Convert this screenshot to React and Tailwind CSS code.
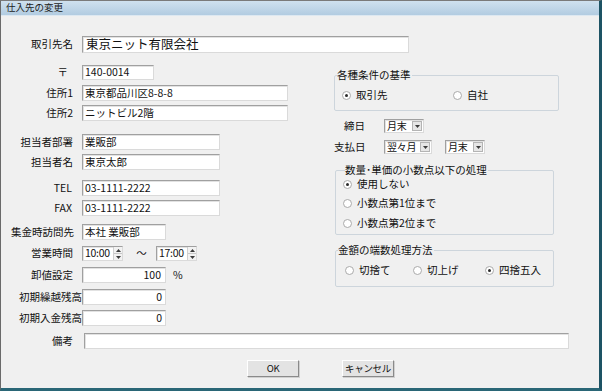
import React from 'react';

const sunken = 'bg-white border border-t-[#a0a0a0] border-l-[#a0a0a0] border-r-[#dadada] border-b-[#dadada] shadow-[inset_1px_1px_0_#e2e2e2]';

const Box = ({ className = '', children }) => (
    <div className={`flex items-center shrink-0 whitespace-nowrap ${sunken} ${className}`}>{children}</div>
);

const Row = ({ label, className = '', lpr = 'pr-[9px]', children }) => (
    <div className={`flex items-center ${className}`}>
        <span className={`w-[81px] shrink-0 text-right whitespace-nowrap ${lpr}`}>{label}</span>
        {children}
    </div>
);

const Radio = ({ label, checked, className = '' }) => (
    <div className={`flex items-center h-[12px] ${className}`}>
        <span className="w-[9px] h-[9px] rounded-full border border-[#aaaaaa] bg-white flex items-center justify-center shrink-0">
            {checked && <span className="w-[3px] h-[3px] rounded-full bg-[#2b2b2b]" />}
        </span>
        <span className="ml-[5px] whitespace-nowrap">{label}</span>
    </div>
);

const Arrow = ({ up }) => (
    <svg width="5" height="3" viewBox="0 0 5 3">
        <path d={up ? 'M2.5 0 L5 3 L0 3 Z' : 'M0 0 L5 0 L2.5 3 Z'} fill="#3a3a3a" />
    </svg>
);

const Select = ({ value, className = '' }) => (
    <Box className={`h-[14px] justify-between ${className}`}>
        <span className="pl-[2px] text-[10px] tracking-[-0.2px]">{value}</span>
        <span className="w-[10px] h-[10px] mr-[1px] bg-[#e6e6e6] border border-[#b4b4b4] flex items-center justify-center shrink-0">
            <Arrow />
        </span>
    </Box>
);

const Spin = ({ value, className = '' }) => (
    <Box className={`h-[15px] justify-between ${className}`}>
        <span className="pl-[2px] tracking-[-0.3px]">{value}</span>
        <span className="w-[9px] h-full flex flex-col border-l border-[#d0d0d0] bg-[#f2f2f2]">
            <span className="flex-1 flex items-center justify-center border-b border-[#c8c8c8]"><Arrow up /></span>
            <span className="flex-1 flex items-center justify-center"><Arrow /></span>
        </span>
    </Box>
);

const Group = ({ title, className = '', children }) => (
    <fieldset className={`border border-[#cdd5dc] rounded-[2px] ${className}`}>
        <legend className="ml-[2px] pr-[1px] leading-[14px] whitespace-nowrap">{title}</legend>
        {children}
    </fieldset>
);

const Button = ({ children }) => (
    <button className="w-[52px] h-[17px] flex items-center justify-center bg-[#e3e3e3] border border-t-[#ffffff] border-l-[#ffffff] border-r-[#8a8a8a] border-b-[#8a8a8a] shadow-[1px_1px_0_#d0d0d0] leading-none whitespace-nowrap text-[9.5px] tracking-[-0.3px]">
        {children}
    </button>
);

export default function App() {
    return (
        <div className="w-[602px] h-[391px] overflow-hidden flex flex-col bg-[#f0f0f0] border-l border-t border-l-[#6a6a6a] border-t-[#7a7a7a] border-r-[3px] border-b-[3px] border-r-[#1d5364] border-b-[#2a6676] font-['Noto_Sans_CJK_JP',sans-serif] text-[10.5px] leading-none text-[#111]">
            {/* title bar */}
            <div className="h-[15px] shrink-0 flex items-center pl-[5px] bg-gradient-to-b from-[#cfe1ef] to-[#b2cce1] border-b border-[#dde8f1] text-[9.5px] text-[#1c1c1c]">
                仕入先の変更
            </div>

            <div className="flex">
                {/* left column */}
                <div className="w-[333px] shrink-0 flex flex-col">
                    <Row label="取引先名" className="mt-[20px]">
                        <Box className="w-[327px] h-[17px] text-[12.5px] pl-[3px]">東京ニット有限会社</Box>
                    </Row>
                    <Row label="〒" className="mt-[12px]" lpr="pr-[14px]">
                        <Box className="w-[72px] h-[15px] pl-[2px]">140-0014</Box>
                    </Row>
                    <Row label="住所1" className="mt-[5px]">
                        <Box className="w-[206px] h-[16px] pl-[2px]">東京都品川区8-8-8</Box>
                    </Row>
                    <Row label="住所2" className="mt-[4px]">
                        <Box className="w-[206px] h-[16px] pl-[2px]">ニットビル2階</Box>
                    </Row>
                    <Row label="担当者部署" className="mt-[13px]">
                        <Box className="w-[138px] h-[16px] pl-[2px]">業販部</Box>
                    </Row>
                    <Row label="担当者名" className="mt-[4px]">
                        <Box className="w-[138px] h-[16px] pl-[2px]">東京太郎</Box>
                    </Row>
                    <Row label="TEL" className="mt-[10px]" lpr="pr-[10px]">
                        <Box className="w-[138px] h-[16px] pl-[2px]">03-1111-2222</Box>
                    </Row>
                    <Row label="FAX" className="mt-[4px]" lpr="pr-[10px]">
                        <Box className="w-[138px] h-[16px] pl-[2px]">03-1111-2222</Box>
                    </Row>
                    <Row label="集金時訪問先" className="mt-[8px]" lpr="pr-[8px]">
                        <Box className="w-[84px] h-[16px] pl-[2px]">本社 業販部</Box>
                    </Row>
                    <div className="flex items-center mt-[6px]">
                        <span className="w-[81px] shrink-0 text-right pr-[9px]">営業時間</span>
                        <Spin value="10:00" className="w-[41px]" />
                        <span className="ml-[13px] w-[11px] text-center">～</span>
                        <Spin value="17:00" className="w-[41px] ml-[9px]" />
                    </div>
                    <div className="flex items-center mt-[6px]">
                        <span className="w-[81px] shrink-0 text-right pr-[9px]">卸値設定</span>
                        <Box className="w-[84px] h-[16px] justify-end pr-[4px]">100</Box>
                        <span className="ml-[7px]">%</span>
                    </div>
                    <Row label="初期繰越残高" className="mt-[6px]" lpr="pr-0">
                        <Box className="w-[84px] h-[16px] justify-end pr-[3px]">0</Box>
                    </Row>
                    <Row label="初期入金残高" className="mt-[5px]" lpr="pr-0">
                        <Box className="w-[84px] h-[16px] justify-end pr-[3px]">0</Box>
                    </Row>
                </div>

                {/* right column */}
                <div className="flex flex-col mt-[52px]">
                    <Group title="各種条件の基準" className="w-[225px] pb-[9px]">
                        <div className="flex mt-[7px] pl-[7px]">
                            <Radio label="取引先" checked className="w-[111px]" />
                            <Radio label="自社" />
                        </div>
                    </Group>
                    <div className="flex items-center mt-[8px]">
                        <span className="w-[31px] text-right">締日</span>
                        <Select value="月末" className="w-[40px] ml-[19px]" />
                    </div>
                    <div className="flex items-center mt-[7px]">
                        <span className="w-[31px] text-right whitespace-nowrap">支払日</span>
                        <Select value="翌々月" className="w-[48px] ml-[19px]" />
                        <Select value="月末" className="w-[40px] ml-[13px]" />
                    </div>
                    <Group title="数量･単価の小数点以下の処理" className="w-[219px] ml-[1px] mt-[9px] pb-[5px] pl-[7px]">
                        <Radio label="使用しない" checked className="mt-[1px]" />
                        <Radio label="小数点第1位まで" className="mt-[7px]" />
                        <Radio label="小数点第2位まで" className="mt-[8px]" />
                    </Group>
                    <Group title="金額の端数処理方法" className="w-[219px] ml-[1px] mt-[8px] pb-[10px]">
                        <div className="flex mt-[7px] pl-[9px]">
                            <Radio label="切捨て" className="w-[68px]" />
                            <Radio label="切上げ" className="w-[72px]" />
                            <Radio label="四捨五入" checked />
                        </div>
                    </Group>
                </div>
            </div>

            <div className="flex items-center mt-[7px]">
                <span className="w-[83px] shrink-0 text-right pr-[11px]">備考</span>
                <Box className="w-[485px] h-[16px]" />
            </div>

            <div className="flex mt-[11px] pl-[246px] gap-[43px]">
                <Button>OK</Button>
                <Button>キャンセル</Button>
            </div>
        </div>
    );
}
